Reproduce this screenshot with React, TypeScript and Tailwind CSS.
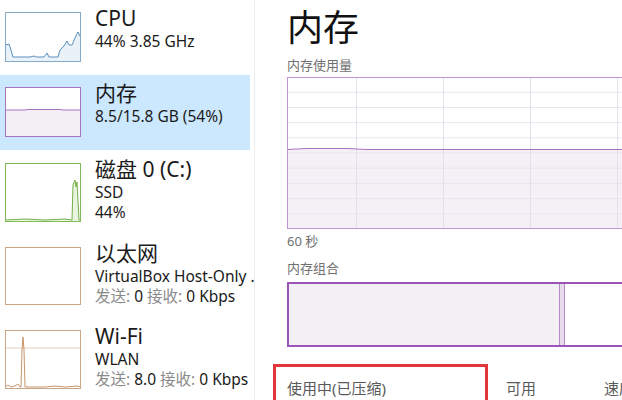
import React from "react";

const font = { fontFamily: '"Noto Sans", "Noto Sans CJK SC", sans-serif' };

function Thumb({ border, h, children }: { border: string; h: number; children?: React.ReactNode }) {
  return (
    <svg width={76} height={h} viewBox={`0 0 76 ${h}`} className="shrink-0 block">
      {children}
      <rect x={0.5} y={0.5} width={75} height={h - 1} fill="none" stroke={border} strokeWidth={1} />
    </svg>
  );
}

function Row({
  selected,
  height,
  top = 12,
  thumb,
  title,
  lines,
}: {
  selected?: boolean;
  height: number;
  top?: number;
  thumb: React.ReactNode;
  title: string;
  lines: React.ReactNode[];
}) {
  return (
    <div
      className={`flex w-[250px] pl-[5px] gap-[14px] ${selected ? "bg-[#cce8ff]" : ""}`}
      style={{ height, paddingTop: top }}
    >
      {thumb}
      <div className="flex flex-col -mt-[6px] whitespace-nowrap text-[#1a1a1a]">
        <div className="text-[21px] leading-[25px]">{title}</div>
        {lines.map((l, i) => (
          <div key={i} className="text-[15.5px] leading-[20px]">
            {l}
          </div>
        ))}
      </div>
    </div>
  );
}

const Gray = ({ children }: { children: React.ReactNode }) => <span className="text-[#8a8a8a]">{children}</span>;

export default function App() {
  const cpuPts = "0,31 2,33 4,32 6,38 8,45 15,45 25,45 29,44 31,45 39,45 42,41 44,45 53,45 55,38 59,34 62,29 64,33 67,33 70,26 73,20 76,26";
  return (
    <div className="w-[622px] h-[400px] flex overflow-hidden bg-white" style={font}>
      {/* sidebar */}
      <div className="w-[255px] shrink-0 overflow-hidden border-r border-[#ececec]">
        <Row
          height={75}
          thumb={
            <Thumb border="#86a9c6" h={50}>
              <polygon points={`${cpuPts} 76,50 0,50`} fill="#e9f2f9" />
              <polyline points={cpuPts} fill="none" stroke="#5c8fbb" strokeWidth={1} />
            </Thumb>
          }
          title="CPU"
          lines={["44% 3.85 GHz"]}
        />
        <Row
          selected
          height={75}
          thumb={
            <Thumb border="#a874c2" h={50}>
              <rect x={0} y={0} width={76} height={50} fill="#ffffff" />
              <rect x={0} y={23} width={76} height={27} fill="#f3eff5" />
              <polyline points="0,23 20,23 23,22.5 55,22.5 58,23 76,23" fill="none" stroke="#a874c2" strokeWidth={1} />
            </Thumb>
          }
          title="内存"
          lines={["8.5/15.8 GB (54%)"]}
        />
        <Row
          height={85}
          top={13}
          thumb={
            <Thumb border="#80bb58" h={59}>
              <rect width={76} height={59} fill="#fff" />
              <polygon points="0,57 20,56 40,57 60,56 67,57 68,22 70,17 71,24 72,19 74,57 76,57 76,59 0,59" fill="#e9f4e1" />
              <polyline points="0,57 20,56 40,57 60,56 67,57 68,22 70,17 71,24 72,19 74,57 76,57" fill="none" stroke="#74b044" strokeWidth={1} />
            </Thumb>
          }
          title="磁盘 0 (C:)"
          lines={["SSD", "44%"]}
        />
        <Row
          height={83}
          thumb={<Thumb border="#caa586" h={58} />}
          title="以太网"
          lines={[
            "VirtualBox Host-Only ...",
            <>
              <Gray>发送:</Gray> 0 <Gray>接收:</Gray> 0 Kbps
            </>,
          ]}
        />
        <Row
          height={82}
          thumb={
            <Thumb border="#caa586" h={59}>
              <line x1={0} y1={18} x2={76} y2={18} stroke="#e3d0c0" strokeWidth={1} />
              <polyline
                points="0,57 3,55 6,57 10,56 13,54 15,57 16,57 17,20 18,7 19,20 20,57 40,57 50,56 60,57 72,56 76,57"
                fill="none"
                stroke="#c8956a"
                strokeWidth={1}
              />
            </Thumb>
          }
          title="Wi-Fi"
          lines={[
            "WLAN",
            <>
              <Gray>发送:</Gray> 8.0 <Gray>接收:</Gray> 0 Kbps
            </>,
          ]}
        />
      </div>

      {/* detail panel */}
      <div className="flex-1 min-w-0 overflow-hidden pl-[32px] pt-[4px]">
        <div className="text-[36px] leading-[48px] text-[#111]">内存</div>
        <div className="text-[13px] leading-[18px] text-[#707070] mt-[4px]">内存使用量</div>
        <svg width={340} height={152} className="block mt-[3px]">
          <rect x={0} y={0} width={340} height={152} fill="#fff" />
          <rect x={0} y={72} width={340} height={80} fill="#f4f0f6" />
          {[15.2, 30.4, 45.6, 60.8, 76, 91.2, 106.4, 121.6, 136.8].map((y) => (
            <line key={y} x1={0} y1={y} x2={340} y2={y} stroke="#ebe4ee" strokeWidth={1} />
          ))}
          {[69, 156, 243, 330].map((x) => (
            <line key={x} x1={x + 0.5} y1={0} x2={x + 0.5} y2={152} stroke="#e6dfe9" strokeWidth={1} />
          ))}
          <polyline points="0,72.5 20,71.5 60,71.5 80,72.5 340,72.5" fill="none" stroke="#a872c2" strokeWidth={1} />
          <rect x={0.5} y={0.5} width={339} height={151} fill="none" stroke="#bf95d2" strokeWidth={1} />
        </svg>
        <div className="text-[13px] leading-[18px] text-[#707070] mt-[3px]">60 秒</div>
        <div className="text-[13px] leading-[18px] text-[#707070] mt-[9px]">内存组合</div>
        <div className="mt-[5px] w-[340px] h-[65px] border-2 border-[#9b55b8] flex">
          <div className="w-[270px] h-full bg-[#f2f0f4]" />
          <div className="w-[6px] h-full bg-[#e6dcec] border-x border-[#b48ac8]" />
          <div className="flex-1 h-full bg-white" />
        </div>
        <div className="flex mt-[17px] -ml-[14px] items-start w-[360px] whitespace-nowrap">
          <div className="shrink-0 w-[215px] h-[50px] border-[3px] border-b-0 border-[#e3363a] pl-[11px] pt-[10px] text-[15px] text-[#5a5a5a] leading-[22px]">
            使用中(已压缩)
          </div>
          <div className="shrink-0 ml-[18px] pt-[13px] text-[15px] text-[#5a5a5a] leading-[22px]">可用</div>
          <div className="shrink-0 ml-[68px] pt-[13px] text-[15px] text-[#5a5a5a] leading-[22px]">速度</div>
        </div>
      </div>
    </div>
  );
}
